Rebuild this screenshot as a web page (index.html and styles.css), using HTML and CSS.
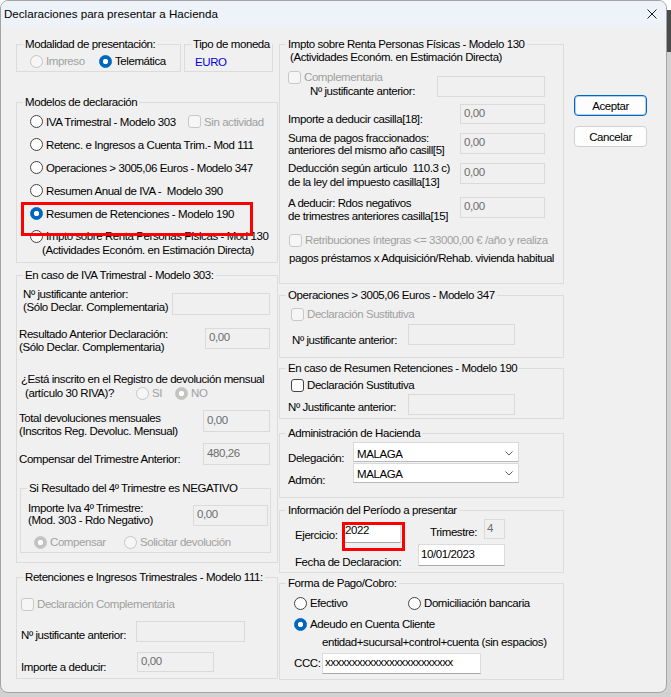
FILE: index.html
```html
<!DOCTYPE html>
<html lang="es">
<head>
<meta charset="utf-8">
<title>Declaraciones para presentar a Hacienda</title>
<link rel="stylesheet" href="styles.css">
</head>
<body>
<div class="win">
  <div class="titlebar">
    <span class="title">Declaraciones para presentar a Hacienda</span>
    <svg class="close" width="10" height="10" viewBox="0 0 10 10"><path d="M0.5 0.5L9.5 9.5M9.5 0.5L0.5 9.5" stroke="#1a1a1a" stroke-width="1" fill="none"/></svg>
  </div>
  <div class="client">
    <div class="col-left">
      <div class="row-top">
        <fieldset class="gb gb-modal">
          <legend>Modalidad de presentación:</legend>
          <div class="opts">
            <span class="opt w69"><span class="radio dis"></span><span class="dtext">Impreso</span></span>
            <span class="opt"><span class="radio on"></span><span>Telemática</span></span>
          </div>
        </fieldset>
        <fieldset class="gb gb-moneda">
          <legend>Tipo de moneda</legend>
          <div class="euro">EURO</div>
        </fieldset>
      </div>

      <fieldset class="gb gb-modelos">
        <legend>Modelos de declaración</legend>
        <div class="mlist">
          <div class="mrow">
            <span class="opt w158"><span class="radio"></span><span>IVA Trimestral - Modelo 303</span></span>
            <span class="opt"><span class="chk dis"></span><span class="dtext">Sin actividad</span></span>
          </div>
          <div class="mrow"><span class="opt"><span class="radio"></span><span>Retenc. e Ingresos a Cuenta Trim.- Mod 111</span></span></div>
          <div class="mrow"><span class="opt"><span class="radio"></span><span>Operaciones &gt; 3005,06 Euros - Modelo 347</span></span></div>
          <div class="mrow"><span class="opt"><span class="radio"></span><span>Resumen Anual de IVA -&nbsp; Modelo 390</span></span></div>
          <div class="mrow mark"><span class="opt"><span class="radio on"></span><span>Resumen de Retenciones - Modelo 190</span></span></div>
          <div class="mrow two"><span class="opt top"><span class="radio rtop"></span><span class="ml">Impto sobre Renta Personas Físicas - Mod 130<br>(Actividades Económ. en Estimación Directa)</span></span></div>
        </div>
      </fieldset>

      <fieldset class="gb gb-iva">
        <legend>En caso de IVA Trimestral - Modelo 303:</legend>
        <div class="r1">
          <div class="t2 r1t">Nº justificante anterior:<br>(Sólo Declar. Complementaria)</div>
          <div class="inp dis r1i"></div>
        </div>
        <div class="r2">
          <div class="t2 r2t">Resultado Anterior Declaración:<br>(Sólo Declar. Complementaria)</div>
          <div class="inp dis r2i">0,00</div>
        </div>
        <div class="r3a">¿Está inscrito en el Registro de devolución mensual</div>
        <div class="r3b">
          <span class="r3t">(artículo 30 RIVA)?</span>
          <span class="opt w39"><span class="radio dis"></span><span class="dtext">SI</span></span>
          <span class="opt"><span class="radio dison"></span><span class="dtext">NO</span></span>
        </div>
        <div class="r4">
          <div class="t2 r4t">Total devoluciones mensuales<br>(Inscritos Reg. Devoluc. Mensual)</div>
          <div class="inp dis r4i">0,00</div>
        </div>
        <div class="r5">
          <div class="r5t">Compensar del Trimestre Anterior:</div>
          <div class="inp dis r4i">480,26</div>
        </div>
        <fieldset class="gb gb-neg">
          <legend>Si Resultado del 4º Trimestre es NEGATIVO</legend>
          <div class="n1">
            <div class="n1t">Importe Iva 4º Trimestre:<br>(Mod. 303 - Rdo Negativo)</div>
            <div class="inp dis n1i">0,00</div>
          </div>
          <div class="n2">
            <span class="opt w90"><span class="radio dison"></span><span class="dtext">Compensar</span></span>
            <span class="opt"><span class="radio dis"></span><span class="dtext">Solicitar devolución</span></span>
          </div>
        </fieldset>
      </fieldset>

      <fieldset class="gb gb-111">
        <legend>Retenciones e Ingresos Trimestrales - Modelo 111:</legend>
        <div class="c1"><span class="opt"><span class="chk dis"></span><span class="dtext">Declaración Complementaria</span></span></div>
        <div class="c2">
          <div class="c2t">Nº justificante anterior:</div>
          <div class="inp dis c2i"></div>
        </div>
        <div class="c3">
          <div class="c3t">Importe a deducir:</div>
          <div class="inp dis c3i">0,00</div>
        </div>
      </fieldset>
    </div>

    <div class="col-right">
      <fieldset class="gb gb-130">
        <legend>Impto sobre Renta Personas Físicas - Modelo 130</legend>
        <div class="sub">(Actividades Económ. en Estimación Directa)</div>
        <div class="p1">
          <div class="p1l">
            <div class="p1a"><span class="opt"><span class="chk dis"></span><span class="dtext">Complementaria</span></span></div>
            <div class="p1b">Nº justificante anterior:</div>
          </div>
          <div class="inp dis p1i"></div>
        </div>
        <div class="p2">
          <div class="pt p2t">Importe a deducir casilla[18]:</div>
          <div class="inp dis pi">0,00</div>
        </div>
        <div class="p3">
          <div class="pt p3t">Suma de pagos fraccionados:<br>anteriores del mismo año casill[5]</div>
          <div class="inp dis pi p3i">0,00</div>
        </div>
        <div class="p4">
          <div class="pt p4t">Deducción según articulo&nbsp; 110.3 c)<br>de la ley del impuesto casilla[13]</div>
          <div class="inp dis pi p4i">0,00</div>
        </div>
        <div class="p5">
          <div class="pt p5t">A deducir: Rdos negativos<br>de trimestres anteriores casilla[15]</div>
          <div class="inp dis pi">0,00</div>
        </div>
        <div class="p6"><span class="opt"><span class="chk dis"></span><span class="dtext">Retribuciones íntegras &lt;= 33000,00 € /año y realiza</span></span></div>
        <div class="p7">pagos préstamos x Adquisición/Rehab. vivienda habitual</div>
      </fieldset>

      <fieldset class="gb gb-347">
        <legend>Operaciones &gt; 3005,06 Euros - Modelo 347</legend>
        <div class="q1"><span class="opt"><span class="chk dis"></span><span class="dtext">Declaración Sustitutiva</span></span></div>
        <div class="q2">
          <div class="q2t">Nº justificante anterior:</div>
          <div class="inp dis qi"></div>
        </div>
      </fieldset>

      <fieldset class="gb gb-190">
        <legend>En caso de Resumen Retenciones - Modelo 190</legend>
        <div class="s1"><span class="opt"><span class="chk"></span><span>Declaración Sustitutiva</span></span></div>
        <div class="s2">
          <div class="s2t">Nº Justificante anterior:</div>
          <div class="inp dis qi"></div>
        </div>
      </fieldset>

      <fieldset class="gb gb-admin">
        <legend>Administración de Hacienda</legend>
        <div class="a1">
          <div class="alab a1t">Delegación:</div>
          <div class="combo c-del"><span>MALAGA</span><svg class="chev" width="8" height="5" viewBox="0 0 8 5"><path d="M0.5 0.5L4 4L7.5 0.5" fill="none" stroke="#5f5f5f" stroke-width="1"/></svg></div>
        </div>
        <div class="a2">
          <div class="alab a2t">Admón:</div>
          <div class="combo c-adm"><span>MALAGA</span><svg class="chev" width="8" height="5" viewBox="0 0 8 5"><path d="M0.5 0.5L4 4L7.5 0.5" fill="none" stroke="#5f5f5f" stroke-width="1"/></svg></div>
        </div>
      </fieldset>

      <fieldset class="gb gb-info">
        <legend>Información del Período a presentar</legend>
        <div class="i1">
          <div class="i1t">Ejercicio:</div>
          <div class="inp en ej mark2">2022</div>
          <div class="i1t2">Trimestre:</div>
          <div class="inp dis trim">4</div>
        </div>
        <div class="i2">
          <div class="i2t">Fecha de Declaracion:</div>
          <div class="inp en fecha">10/01/2023</div>
        </div>
      </fieldset>

      <fieldset class="gb gb-pago">
        <legend>Forma de Pago/Cobro:</legend>
        <div class="f1">
          <span class="opt w114"><span class="radio"></span><span>Efectivo</span></span>
          <span class="opt"><span class="radio"></span><span>Domiciliación bancaria</span></span>
        </div>
        <div class="f2"><span class="opt"><span class="radio on"></span><span>Adeudo en Cuenta Cliente</span></span></div>
        <div class="f3">entidad+sucursal+control+cuenta (sin espacios)</div>
        <div class="f4">
          <div class="f4t">CCC:</div>
          <div class="inp en ccc">xxxxxxxxxxxxxxxxxxxxxxxx</div>
        </div>
      </fieldset>
    </div>

    <div class="col-btn">
      <div class="btn def">Aceptar</div>
      <div class="btn cancel">Cancelar</div>
    </div>
  </div>
</div>
</body>
</html>
```

FILE: styles.css
```css
* { box-sizing: border-box; }
html, body { margin: 0; padding: 0; }
body {
  width: 671px;
  height: 697px;
  overflow: hidden;
  background: linear-gradient(to bottom, #ffffff 0, #ffffff 10px, #4b4b4b 10px, #4b4b4b 52px, #d2d2d2 52px);
  font-family: "Liberation Sans", Arial, sans-serif;
  font-size: 11.5px;
  line-height: 14px;
  letter-spacing: -0.42px;
  color: #000;
}

.win {
  width: 667px;
  height: 693px;
  border: 1px solid #a3a3a3;
  border-radius: 8px;
  background: #f0f0f0;
  overflow: hidden;
  display: flex;
  flex-direction: column;
}
.titlebar {
  flex: none;
  height: 26px;
  background: #eef3f9;
  display: flex;
  align-items: center;
  justify-content: space-between;
  padding: 0 9px 0 3px;
}
.title { font-size: 11.6px; letter-spacing: 0; }
.close { display: block; }

.client {
  flex: 1;
  display: flex;
  align-items: flex-start;
  padding: 10px 0 0 15px;
}
.col-left { width: 262px; display: flex; flex-direction: column; flex: none; }
.col-right { width: 285px; margin-left: 1px; display: flex; flex-direction: column; flex: none; }
.col-btn { width: 73px; margin-left: 10px; padding-top: 58px; flex: none; }

/* group boxes */
.gb {
  margin: 0;
  padding: 0;
  border: 1px solid #dcdcdc;
  min-width: 0;
}
.gb legend {
  margin-left: 6px;
  padding: 0 2px;
  line-height: 14px;
}

/* controls */
.opt { display: flex; align-items: center; gap: 3px; flex: none; }
.opt.top { align-items: flex-start; }
.w39 { width: 39px; }
.w69 { width: 69px; }
.w90 { width: 90px; }
.w114 { width: 114px; }
.w158 { width: 158px; }
.dtext { color: #a0a0a0; }

.radio {
  flex: none;
  width: 13px;
  height: 13px;
  border-radius: 50%;
  border: 1px solid #444;
  background: #fff;
}
.radio.on {
  border-color: #0067c0;
  background: radial-gradient(circle, #fff 0, #fff 2.4px, #0067c0 3px);
}
.radio.dis { border-color: #c6c6c6; background: #f6f6f6; }
.radio.dison {
  border-color: #c3c3c3;
  background: radial-gradient(circle, #fff 0, #fff 2.4px, #c3c3c3 3px);
}
.chk {
  flex: none;
  width: 13px;
  height: 13px;
  border-radius: 3px;
  border: 1px solid #444;
  background: #fff;
}
.chk.dis { border-color: #c8c8c8; background: #f6f6f6; }

.inp {
  flex: none;
  border: 1px solid #dadada;
  background: #f0f0f0;
  color: #6d6d6d;
  padding: 1px 0 0 3px;
  line-height: 14px;
  white-space: nowrap;
}
.inp.en {
  background: #fff;
  color: #000;
  border-color: #dcdcdc #dcdcdc #a8a8a8 #dcdcdc;
  padding-left: 2px;
}

/* top row */
.row-top { display: flex; }
.gb-modal { width: 165px; height: 35px; }
.gb-moneda { width: 89px; height: 35px; margin-left: 3px; }
.opts { display: flex; align-items: center; height: 14px; margin: 3px 0 0 13px; }
.euro { margin: 4px 0 0 10px; color: #0000e6; }

/* modelos */
.gb-modelos { margin-top: 23px; height: 168px; }
.mlist { margin: 1px 0 0 13px; }
.mrow { height: 23px; display: flex; align-items: center; }
.mrow.two { height: auto; align-items: flex-start; padding-top: 4px; }
.rtop { margin-top: 1px; }
.ml { margin-left: -4px; text-indent: 4px; }
.mark { position: relative; }
.mark::after {
  content: "";
  position: absolute;
  left: -9px;
  top: 0;
  width: 226px;
  height: 28px;
  border: 3px solid #f00;
}

/* IVA 303 */
.gb-iva { margin-top: 5px; height: 295px; }
.t2 { line-height: 13px; flex: none; }
.r1 { display: flex; margin-top: 6px; }
.r1t { margin-left: 6px; width: 149px; }
.r1i { width: 98px; height: 22px; margin-top: 5px; }
.r2 { display: flex; margin-top: 13px; }
.r2t { margin-left: 2px; width: 186px; }
.r2i { width: 65px; height: 21px; }
.r3a { margin: 18px 0 0 4px; }
.r3b { display: flex; align-items: center; height: 14px; }
.r3t { margin-left: 8px; width: 111px; flex: none; }
.r4 { display: flex; margin-top: 10px; }
.r4t { margin: 2px 0 0 2px; width: 184px; }
.r4i { width: 67px; height: 22px; padding-top: 2px; }
.r5 { display: flex; margin-top: 5px; }
.r5t { margin: 9px 0 0 2px; width: 184px; flex: none; }

.gb-neg { margin: 15px 0 0 3px; width: 251px; height: 72px; }
.n1 { display: flex; margin-top: 7px; }
.n1t { line-height: 12px; margin-left: 7px; width: 165px; flex: none; }
.n1i { width: 75px; height: 21px; margin-top: 3px; }
.n2 { display: flex; align-items: center; height: 14px; margin: 9px 0 0 13px; }

/* Modelo 111 */
.gb-111 { margin-top: 7px; height: 109px; }
.c1 { display: flex; align-items: center; height: 14px; margin: 13px 0 0 4px; }
.c2 { display: flex; margin-top: 10px; }
.c2t { margin: 7px 0 0 4px; width: 115px; flex: none; }
.c2i { width: 109px; height: 21px; }
.c3 { display: flex; margin-top: 10px; }
.c3t { margin: 8px 0 0 4px; width: 116px; flex: none; }
.c3i { width: 77px; height: 20px; }

/* Modelo 130 */
.gb-130 { height: 247px; }
.sub { line-height: 12px; margin-left: 10px; }
.p1 { display: flex; margin-top: 7px; }
.p1l { width: 157px; flex: none; }
.p1a { display: flex; align-items: center; height: 14px; margin-left: 8px; }
.p1b { margin-left: 30px; }
.p1i { width: 108px; height: 21px; margin-top: 6px; }
.pt { margin-left: 8px; width: 172px; flex: none; }
.pi { width: 85px; height: 21px; }
.p2 { display: flex; margin-top: 6px; }
.p2t { margin-top: 8px; }
.p2 .pi { height: 20px; }
.p3 { display: flex; margin-top: 6px; }
.p3t { line-height: 12px; }
.p3i { margin-top: 1px; }
.p4 { display: flex; margin-top: 5px; }
.p4t { line-height: 14px; }
.p4i { margin-top: 2px; }
.p5 { display: flex; margin-top: 8px; }
.p5t { line-height: 12.5px; }
.p6 { display: flex; align-items: center; height: 14px; margin: 11px 0 0 9px; }
.p7 { margin: 4px 0 0 9px; }

/* 347 / 190 */
.gb-347 { margin-top: 4px; height: 70px; }
.q1 { display: flex; align-items: center; height: 14px; margin: 5px 0 0 11px; }
.q2 { display: flex; margin-top: 3px; }
.q2t { margin: 9px 0 0 12px; width: 116px; flex: none; }
.qi { width: 107px; height: 21px; }
.gb-190 { margin-top: 3px; height: 58px; }
.s1 { display: flex; align-items: center; height: 14px; margin: 3px 0 0 11px; }
.s2 { display: flex; margin-top: 2px; }
.s2t { margin: 6px 0 0 8px; width: 120px; flex: none; }

/* Administración */
.gb-admin { margin-top: 7px; height: 72px; }
.a1 { display: flex; height: 21px; margin-top: 2px; }
.a2 { display: flex; height: 20px; }
.alab { margin-left: 8px; width: 65px; flex: none; }
.a1t { margin-top: 9px; }
.a2t { margin-top: 10px; }
.combo {
  flex: none;
  width: 166px;
  height: 20px;
  display: flex;
  align-items: flex-start;
  justify-content: space-between;
  background: #fff;
  border: 1px solid #d9d9d9;
  border-bottom-color: #b9b9b9;
  padding: 3px 5px 0 3px;
}
.c-del { padding-top: 4px; }
.chev { display: block; margin-top: 4px; }

/* Información */
.gb-info { margin-top: 5px; height: 70px; }
.i1 { display: flex; align-items: flex-start; margin-top: 2px; }
.i1t { margin: 9px 0 0 15px; width: 47px; flex: none; }
.ej { width: 59px; height: 21px; margin-top: 3px; padding: 0 0 0 10px; }
.mark2 { position: relative; }
.mark2::after {
  content: "";
  position: absolute;
  left: -1px;
  top: -1px;
  width: 57px;
  height: 23px;
  border: 3px solid #f00;
}
.i1t2 { margin: 6px 0 0 29px; width: 54px; flex: none; }
.trim { width: 21px; height: 20px; padding-left: 2px; }
.i2 { display: flex; margin-top: 1px; }
.i2t { margin: 11px 0 0 15px; width: 123px; flex: none; }
.fecha { width: 87px; height: 22px; padding-top: 2px; }

/* Forma de pago */
.gb-pago { margin-top: 3px; height: 104px; }
.f1 { display: flex; align-items: center; height: 14px; margin: 6px 0 0 14px; }
.f2 { display: flex; align-items: center; height: 14px; margin: 7px 0 0 14px; }
.f3 { margin: 4px 0 0 42px; }
.f4 { display: flex; margin-top: 4px; }
.f4t { margin: 3px 0 0 14px; width: 28px; flex: none; }
.ccc { width: 159px; height: 21px; padding-left: 3px; }

/* buttons */
.btn {
  width: 73px;
  height: 21px;
  border: 1px solid #d0d0d0;
  border-radius: 4px;
  background: #fdfdfd;
  display: flex;
  align-items: center;
  justify-content: center;
}
.btn.def {
  border-color: #0067c0;
  box-shadow: inset 0 0 0 1px rgba(0, 103, 192, 0.3);
}
.btn.cancel { margin-top: 10px; }
```
